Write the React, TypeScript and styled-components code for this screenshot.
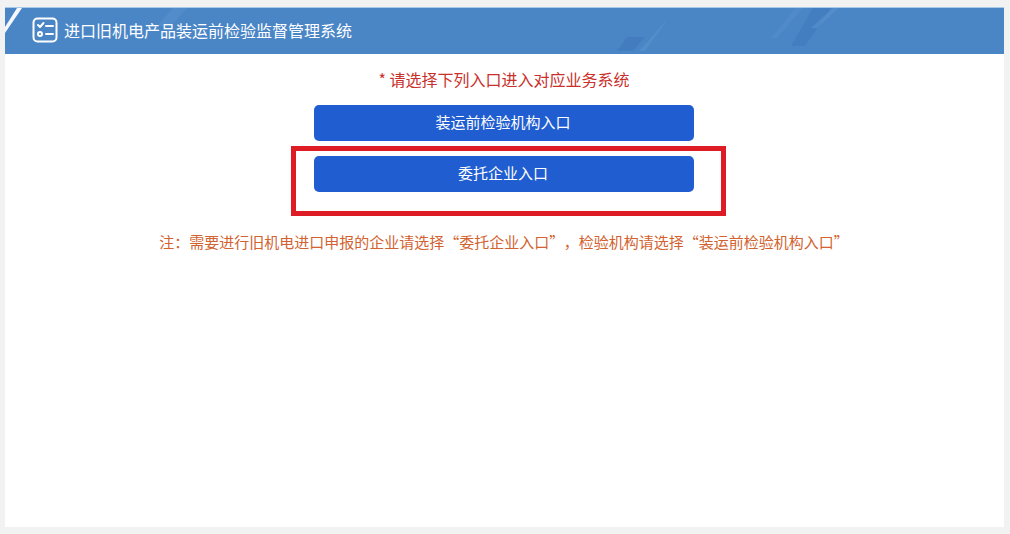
import React from 'react'
import styled, { createGlobalStyle } from 'styled-components'

const GlobalStyle = createGlobalStyle`
  html, body {
    margin: 0;
    padding: 0;
    background: #f2f2f3;
  }
  body {
    font-family: "Noto Sans CJK SC", "Liberation Sans", sans-serif;
  }
`

const Page = styled.div`
  box-sizing: border-box;
  width: 1010px;
  height: 534px;
  padding: 7px 6px 7px 5px;
  overflow: hidden;
`

const Panel = styled.main`
  height: 100%;
  background: #ffffff;
  display: flex;
  flex-direction: column;
`

const Header = styled.header`
  position: relative;
  box-sizing: border-box;
  height: 47px;
  flex: none;
  display: flex;
  align-items: center;
  gap: 6px;
  padding-left: 27px;
  background: #4a85c6;
  border-top: 1px solid #a9cbe8;
  overflow: hidden;
`

const Decor = styled.svg`
  position: absolute;
  left: 0;
  top: 0;
  width: 999px;
  height: 47px;
  pointer-events: none;
`

const Title = styled.h1`
  position: relative;
  margin: 0 0 2px;
  font-size: 16px;
  font-weight: 400;
  line-height: 24px;
  color: #ffffff;
`

const LogoIcon = styled.svg`
  position: relative;
  width: 26px;
  height: 26px;
  flex: none;
  margin-bottom: 2px;
`

const Content = styled.section`
  display: flex;
  flex-direction: column;
  align-items: center;
  padding: 13px 1px 0 0;
`

const Notice = styled.p`
  margin: 0 0 14px;
  font-size: 16px;
  line-height: 24px;
  color: #c9302c;
`

const EntryWrap = styled.div<{ $gap: number }>`
  position: relative;
  margin-bottom: ${p => p.$gap}px;
`

const EntryButton = styled.button`
  display: block;
  width: 380px;
  height: 36px;
  padding: 0 2px 2px 0;
  border: none;
  border-radius: 5px;
  background: #1f5dd0;
  color: #ffffff;
  font-family: inherit;
  font-size: 15px;
  line-height: 34px;
`

const Highlight = styled.div`
  position: absolute;
  top: -10px;
  left: -23px;
  right: -32px;
  bottom: -24px;
  border: 5px solid #dd1c26;
  pointer-events: none;
`

const Note = styled.p`
  margin: 0;
  font-size: 15px;
  line-height: 24px;
  white-space: nowrap;
  color: #d2622f;
`

const NoteComma = styled.span`
  margin-left: 7px;
`

const App: React.FC = () => {
  return (
    <>
      <GlobalStyle />
      <Page>
        <Panel>
          <Header>
            <Decor viewBox="0 0 999 47">
              <polygon points="0,19 12,0 17,0 0,25" fill="#f4f7fb" />
              <polygon points="152,18 168,0 182,0 166,18" fill="#5f95cf" opacity="0.4" />
              <polygon points="612,43 622,29 640,29 628,43" fill="#3f78bb" opacity="0.6" />
              <polygon points="634,43 660,14 661,14 640,43" fill="#5a92cd" opacity="0.6" />
              <polygon points="766,30 790,0 798,0 772,30" fill="#5a92cd" opacity="0.4" />
              <polygon points="786,38 808,0 826,0 800,38" fill="#4079bc" opacity="0.6" />
              <polygon points="806,20 830,-2 836,-2 812,20" fill="#5f96d0" opacity="0.5" />
            </Decor>
            <LogoIcon viewBox="0 0 26 26" fill="none" stroke="#ffffff" strokeWidth="2" strokeLinecap="round" strokeLinejoin="round">
              <rect x="1.5" y="1.5" width="23" height="23" rx="4" />
              <path d="M6 8l2 2 3.5-4" />
              <circle cx="8" cy="17" r="2" />
              <path d="M14 9h7M14 17h7" />
            </LogoIcon>
            <Title>进口旧机电产品装运前检验监督管理系统</Title>
          </Header>
          <Content>
            <Notice>* 请选择下列入口进入对应业务系统</Notice>
            <EntryWrap $gap={15}>
              <EntryButton>装运前检验机构入口</EntryButton>
            </EntryWrap>
            <EntryWrap $gap={38}>
              <EntryButton>委托企业入口</EntryButton>
              <Highlight />
            </EntryWrap>
            <Note>
              {'注\uFF1A需要进行旧机电进口申报的企业请选择“委托企业入口”'}
              <NoteComma>{'\uFF0C'}</NoteComma>
              检验机构请选择“装运前检验机构入口”
            </Note>
          </Content>
        </Panel>
      </Page>
    </>
  )
}

export default App
